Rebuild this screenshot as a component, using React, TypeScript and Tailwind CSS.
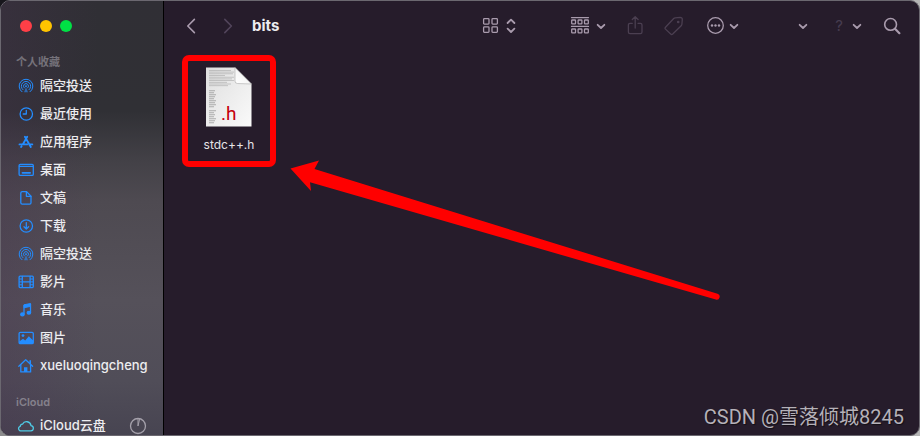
import type { ReactNode } from 'react';

type IconProps = { className?: string };

const line = {
  fill: 'none',
  stroke: 'currentColor',
  strokeWidth: 1.3,
  strokeLinecap: 'round',
  strokeLinejoin: 'round',
} as const;

function Svg({ className = 'size-5', children }: IconProps & { children: ReactNode }) {
  return (
    <svg viewBox="0 0 20 20" className={`${className} shrink-0`} aria-hidden="true" {...line}>
      {children}
    </svg>
  );
}

/* Sidebar icons */
const AirDrop = () => (
  <Svg>
    <g strokeWidth="1">
      <path d="M6 15.8a6.900 6.900 0 1 1 8 0" />
      <path d="M6.900 13.700a4.700 4.700 0 1 1 6.200 0" />
      <path d="M8.200 11.900a2.500 2.500 0 1 1 3.600 0" />
    </g>
    <path d="M10 11 12 16.200H8Z" fill="currentColor" stroke="none" opacity=".6" />
    <circle cx="10" cy="10.2" r=".9" fill="currentColor" stroke="none" />
  </Svg>
);

const Clock = () => (
  <Svg>
    <circle cx="10.3" cy="10" r="6.2" />
    <path d="M10.3 6.3V10H7.2" />
  </Svg>
);

const Apps = () => (
  <Svg>
    <path d="M11.2 4.8 6.9 12.2M8.9 4.8l5.9 10.2M3.5 12.4h7.6M13.6 12.4h2.7M5.600 14.200l-.5.8" strokeWidth="1.9" />
  </Svg>
);

const Desktop = () => (
  <Svg>
    <rect x="3.1" y="4.4" width="14.2" height="11" rx="1.2" />
    <path d="M3.5 6.3h13.4" />
    <path d="M6.5 12.8h7.6" strokeWidth="1.8" />
  </Svg>
);

const Doc = () => (
  <Svg>
    <path d="M6.2 3.6h4.4l4.4 4.6v6.6a1.4 1.4 0 0 1-1.4 1.4H6.2a1.4 1.4 0 0 1-1.4-1.4V5a1.4 1.4 0 0 1 1.4-1.4Z" />
    <path d="M10.4 3.8v4.5H15" />
  </Svg>
);

const Download = () => (
  <Svg>
    <circle cx="10.3" cy="10" r="6.2" />
    <path d="M10.3 6.6v6.2M8 10.8l2.3 2.3 2.3-2.3" />
  </Svg>
);

const Film = () => (
  <Svg>
    <rect x="3.1" y="4.2" width="14.2" height="11.4" rx="1" />
    <path d="M6.3 4.4v11M14.1 4.4v11M6.3 9.9h7.8" />
    <path d="M3.6 7h2.5M3.6 9.9h2.5M3.6 12.8h2.5M14.4 7h2.5M14.4 9.9h2.5M14.4 12.8h2.5" strokeWidth="1" />
  </Svg>
);

const Music = () => (
  <Svg>
    <path d="M8 14V5.4l6.5-1.3v8.3" />
    <path d="M8 5.2v2.5l6.5-1.3V3.9Z" fill="currentColor" strokeWidth="1" />
    <ellipse cx="6.4" cy="14.4" rx="1.7" ry="1.4" fill="currentColor" />
    <ellipse cx="12.9" cy="12.8" rx="1.7" ry="1.4" fill="currentColor" />
  </Svg>
);

const Picture = () => (
  <Svg>
    <rect x="3.1" y="4.4" width="14.2" height="11.2" rx="1.2" />
    <path d="M3.2 13.6 7 10.7l2.2 1.7 3.6-4.2 4.4 4.2v2.2a1 1 0 0 1-1 1H4.2a1 1 0 0 1-1-1Z" fill="currentColor" stroke="none" />
    <circle cx="7" cy="7.6" r="1.4" fill="currentColor" stroke="none" />
  </Svg>
);

const Home = () => (
  <Svg>
    <path d="m2.8 10.2 6.9-6.4 6.9 6.4" />
    <path d="M14.2 7.8V4.9" strokeWidth="1.6" />
    <path d="M4.8 9v6.9h9.8V9" />
    <path d="M8 16v-4.8h3.4V16Z" fill="currentColor" stroke="none" />
  </Svg>
);

const Cloud = () => (
  <Svg>
    <path d="M5.5 14.8h9a2.6 2.6 0 0 0 .5-5.2 4.5 4.5 0 0 0-8.5-1.4 2 2 0 0 0-2.2 2.1 2.3 2.3 0 0 0 1.2 4.5Z" />
  </Svg>
);

/* Toolbar icons */
const ChevronDown = ({ className = 'size-4' }: IconProps) => (
  <Svg className={className}>
    <path d="m5.8 8.5 4.2 4 4.2-4" strokeWidth="2.3" />
  </Svg>
);

const Back = () => (
  <Svg>
    <path d="M13.4 3.4 6.8 10l6.6 6.6" strokeWidth="1.6" />
  </Svg>
);

const Forward = () => (
  <Svg>
    <path d="M6.8 3.4 13.4 10l-6.6 6.6" strokeWidth="1.6" />
  </Svg>
);

const GridView = () => (
  <Svg>
    <rect x="2.6" y="2.7" width="5.4" height="5.4" rx=".8" />
    <rect x="11" y="2.7" width="5.4" height="5.4" rx=".8" />
    <rect x="2.6" y="10.9" width="5.4" height="5.4" rx=".8" />
    <rect x="11" y="10.9" width="5.4" height="5.4" rx=".8" />
  </Svg>
);

const UpDown = () => (
  <Svg>
    <path d="M6.6 7 10 3.6 13.4 7M6.6 12.6 10 16l3.4-3.4" strokeWidth="1.8" />
  </Svg>
);

const GroupBy = () => (
  <Svg>
    <path d="M1.5 1.6h17M1.5 10.4h17" />
    {[1.7, 8.1, 14.5].map((x) => (
      <g key={x}>
        <rect x={x} y="4" width="3.8" height="3.8" rx=".6" />
        <rect x={x} y="13" width="3.8" height="3.8" rx=".6" />
      </g>
    ))}
  </Svg>
);

const Share = () => (
  <Svg>
    <path d="M7.3 7.3H5a1.6 1.6 0 0 0-1.6 1.6V16A1.6 1.6 0 0 0 5 17.6h10.4A1.6 1.6 0 0 0 17 16V8.9a1.6 1.6 0 0 0-1.6-1.6H13" />
    <path d="M10.2 12V.8M7.3 3.5 10.2.8l2.9 2.7" />
  </Svg>
);

const Tag = () => (
  <Svg>
    <path d="M1.5 11.2 9.7 2.5q.6-.6 1.5-.7l4.9-.4q2.2 0 2.2 2.1l-.4 4.7q-.1.9-.7 1.5l-8.5 8.3q-1 .9-2 0l-5.2-4.9q-.9-.9 0-1.9Z" />
    <circle cx="14.2" cy="6" r=".7" fill="currentColor" />
  </Svg>
);

const More = () => (
  <Svg>
    <circle cx="9.5" cy="9.5" r="7.8" />
    <g fill="currentColor" stroke="none">
      <circle cx="6" cy="9.5" r="1.2" />
      <circle cx="9.5" cy="9.5" r="1.2" />
      <circle cx="13" cy="9.5" r="1.2" />
    </g>
  </Svg>
);

const Search = () => (
  <Svg>
    <circle cx="8.6" cy="8.4" r="5.9" strokeWidth="1.6" />
    <path d="m13 12.8 4.4 4.4" strokeWidth="2.2" />
  </Svg>
);

const FAVORITES = [
  { label: '隔空投送', icon: AirDrop },
  { label: '最近使用', icon: Clock },
  { label: '应用程序', icon: Apps },
  { label: '桌面', icon: Desktop },
  { label: '文稿', icon: Doc },
  { label: '下载', icon: Download },
  { label: '隔空投送', icon: AirDrop },
  { label: '影片', icon: Film },
  { label: '音乐', icon: Music },
  { label: '图片', icon: Picture },
  { label: 'xueluoqingcheng', icon: Home },
];

function Sidebar() {
  return (
    <aside className="w-[163px] shrink-0 border-r border-black bg-[linear-gradient(to_bottom,#302f35_0,#303035_110px,#434147_160px,#4e4a51_200px,#55515a_300px,#504d58_380px,#474451_436px)] text-[13px] font-medium text-[#ededf0]">
      <div className="h-full bg-[linear-gradient(to_right,rgba(72,50,78,0.3),transparent_60%)] pl-[15px]">
        <div className="flex h-[50px] items-center gap-2 pl-1">
          <button aria-label="关闭" className="size-3 rounded-full bg-[#ff3f47]" />
          <button aria-label="最小化" className="size-3 rounded-full bg-[#ffc400]" />
          <button aria-label="缩放" className="size-3 rounded-full bg-[#00e045]" />
        </div>

        <h2 className="mt-px h-5 text-[11px] leading-5 font-semibold text-[#75727a]">个人收藏</h2>
        <nav>
          {FAVORITES.map((item, i) => (
            <a key={i} href="#" className="flex h-7 items-center gap-1">
              <span className="text-[#248dff]">
                <item.icon />
              </span>
              {item.label}
            </a>
          ))}
        </nav>

        <h2 className="mt-3 h-5 text-[11px] leading-5 font-semibold text-[#85818c]">iCloud</h2>
        <div className="flex h-7 items-center justify-between pr-4">
          <a href="#" className="flex items-center gap-1">
            <span className="text-[#4fc9e4]">
              <Cloud />
            </span>
            iCloud云盘
          </a>
          <Svg className="size-5 text-[#a4a0aa]">
            <circle cx="11" cy="10" r="7.5" />
            <path d="M11 3v7l1.5-6.5" strokeWidth="1" />
          </Svg>
        </div>
      </div>
    </aside>
  );
}

function Toolbar() {
  return (
    <header className="flex h-[50px] shrink-0 items-center px-[17px] text-[#a99bad]">
      <button aria-label="后退">
        <Back />
      </button>
      <button aria-label="前进" className="ml-[17px] text-[#51445a]">
        <Forward />
      </button>
      <h1 className="ml-3.5 text-[15px] font-bold text-[#ececef]">bits</h1>

      <div className="ml-auto flex items-center">
        <button aria-label="显示方式" className="flex items-center">
          <GridView />
          <UpDown />
        </button>
        <button aria-label="分组" className="ml-[49px] flex items-center gap-[3px]">
          <GroupBy />
          <ChevronDown />
        </button>
        <button aria-label="共享" className="ml-4 text-[#4b3f51]">
          <Share />
        </button>
        <button aria-label="标签" className="ml-[19px] text-[#4b3f51]">
          <Tag />
        </button>
        <button aria-label="更多" className="ml-[22px] flex items-center">
          <More />
          <ChevronDown />
        </button>
        <button aria-label="选项" className="ml-[53px]">
          <ChevronDown />
        </button>
        <button aria-label="帮助" className="ml-[18px] flex items-center">
          <span className="w-5 text-center text-[15px] text-[#473d50]">?</span>
          <ChevronDown />
        </button>
        <button aria-label="搜索" className="ml-[17px]">
          <Search />
        </button>
      </div>
    </header>
  );
}

// widths of the tiny code lines shown on the page preview
const COMMENT_LINES = [22, 25, 24, 16, 25, 23, 25, 18, 22, 19];
const CODE_LINES = [6, 5, 7, 6, 5, 7, 6, 7, 5, 0, 7, 5, 6, 5, 7, 6, 5];

function HeaderFile() {
  return (
    <svg viewBox="0 0 46 60" className="h-[60px] w-[46px]" role="img" aria-label="stdc++.h">
      <defs>
        <linearGradient id="paper" x1="0" y1="0" x2="1" y2="1">
          <stop offset="0" stopColor="#dedede" />
          <stop offset="1" stopColor="#fafafa" />
        </linearGradient>
        <linearGradient id="fold" x1="0" y1="1" x2="1" y2="0">
          <stop offset="0" stopColor="#ffffff" />
          <stop offset="0.6" stopColor="#f4f4f4" />
          <stop offset="1" stopColor="#c8c8c8" />
        </linearGradient>
      </defs>
      <path d="M0 .5H29L45.500 17v42.500H0Z" fill="url(#paper)" />
      <g fill="#8d8d8d" opacity=".5">
        {COMMENT_LINES.map((w, i) => (
          <rect key={i} x="3" y={3 + i * 1.7} width={w} height=".8" />
        ))}
        {CODE_LINES.map((w, i) => (
          <rect key={i} x="3" y={23 + i * 2} width={w} height="1.3" />
        ))}
      </g>
      <path d="M29 .5V14q0 2.500 2.500 2.500l14 .5Z" fill="url(#fold)" stroke="#a9a9a9" strokeWidth=".6" />
      <text x="15" y="53" fontSize="19" fill="#c4000c" className="font-['Roboto',sans-serif]">
        .h
      </text>
    </svg>
  );
}

export default function App() {
  return (
    <div className="h-screen overflow-hidden bg-[linear-gradient(135deg,#17161c_10%,#b5b5b5_40%)] font-['Inter','Noto_Sans_CJK_SC',sans-serif]">
      <div className="relative flex h-full overflow-hidden rounded-[10px] border border-[#6b6870] bg-[#261c2b]">
        <Sidebar />

        <main className="flex min-w-0 flex-1 flex-col">
          <Toolbar />
          <div className="flex-1 pt-1 pl-[18px]">
            <figure className="flex h-28 w-[94px] flex-col items-center rounded-[7px] border-[6px] border-[#ff0000] pt-1.5">
              <HeaderFile />
              <figcaption className="mt-2 text-[12px] leading-5 text-[#e6e4e8]">stdc++.h</figcaption>
            </figure>
          </div>
        </main>

        {/* arrow pointing at the file */}
        <svg viewBox="0 0 430 142" className="absolute top-[158px] left-[289px] h-[142px] w-[430px]" aria-hidden="true">
          <path d="M.5 9.5 29 1.5 24.5 10 427.5 134.8a3 3 0 0 1-1.7 5.8L20 23.200 21 32Z" fill="#ff0000" />
        </svg>

        <p className="absolute right-[15px] bottom-1 font-['Roboto','Noto_Sans_CJK_SC',sans-serif] text-[20px] leading-7 text-[#b5b1b8] [text-shadow:1px_1px_1px_#00000080]">
          CSDN @雪落倾城8245
        </p>
      </div>
    </div>
  );
}
